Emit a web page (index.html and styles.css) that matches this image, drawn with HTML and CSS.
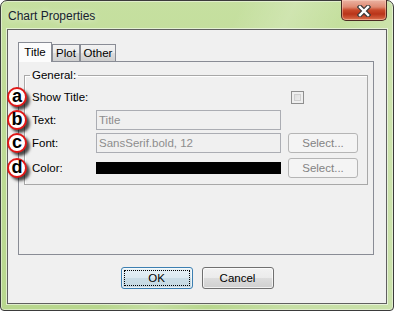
FILE: index.html
```html
<!DOCTYPE html>
<html>
<head>
<meta charset="utf-8">
<link rel="stylesheet" href="styles.css">
</head>
<body>
<div class="window">
  <div class="titlebar">
    <span class="title">Chart Properties</span>
    <div class="close">
      <svg width="14" height="12" viewBox="0 0 14 12">
        <path d="M3 2 L11 10 M11 2 L3 10" stroke="#3a3a3a" stroke-width="4.6" stroke-linecap="square"/>
        <path d="M3 2 L11 10 M11 2 L3 10" stroke="#ffffff" stroke-width="2.4" stroke-linecap="square"/>
      </svg>
    </div>
  </div>
  <div class="client">
    <div class="tabs">
      <div class="tab active tab-title">Title</div>
      <div class="tab tab-plot">Plot</div>
      <div class="tab tab-other">Other</div>
    </div>
    <div class="panel">
      <fieldset class="group">
        <legend>General:</legend>
        <div class="grid">
          <div class="label"><span class="mark">a</span>Show Title:</div>
          <div></div>
          <div class="checkcell"><span class="check"></span></div>

          <div class="label"><span class="mark">b</span>Text:</div>
          <div class="field">Title</div>
          <div></div>

          <div class="label"><span class="mark">c</span>Font:</div>
          <div class="field">SansSerif.bold, 12</div>
          <div class="btn disabled">Select...</div>

          <div class="label last"><span class="mark">d</span>Color:</div>
          <div class="colorcell last"><div class="swatch"></div></div>
          <div class="btn disabled last">Select...</div>
        </div>
      </fieldset>
    </div>
    <div class="buttons">
      <div class="btn push ok"><span class="focus">OK</span></div>
      <div class="btn push cancel">Cancel</div>
    </div>
  </div>
</div>
</body>
</html>
```

FILE: styles.css
```css
* { box-sizing: border-box; }
html, body {
  margin: 0;
  padding: 0;
  width: 394px;
  height: 311px;
  overflow: hidden;
  background: #ffffff;
}
body {
  font-family: "Liberation Sans", Arial, sans-serif;
  font-size: 11px;
  color: #000;
}
.window {
  width: 394px;
  height: 311px;
  border: 1px solid #3b3b3b;
  border-radius: 7px 7px 4px 4px;
  padding: 0 6px 6px 6px;
  display: flex;
  flex-direction: column;
  background:
    linear-gradient(115deg, rgba(255,255,255,0) 0%, rgba(255,255,255,0) 45%, rgba(255,255,255,0.18) 55%, rgba(255,255,255,0) 65%, rgba(255,255,255,0.2) 80%, rgba(255,255,255,0.25) 100%),
    linear-gradient(180deg, #c6e0a0 0%, #c0dc98 30%, #b8d78e 100%);
  box-shadow: inset 0 0 0 1px rgba(255,255,255,0.45);
}
.titlebar {
  height: 28px;
  display: flex;
  align-items: flex-start;
  position: relative;
}
.title {
  font-family: "Liberation Sans", Arial, sans-serif;
  font-size: 12px;
  color: #17222e;
  margin-top: 8px;
  margin-left: 1px;
  text-shadow: 0 0 6px rgba(255,255,255,0.9);
}
.close {
  margin-left: auto;
  margin-right: 0px;
  margin-top: -1px;
  width: 46px;
  height: 21px;
  border: 1px solid #4b2a22;
  border-top: none;
  border-radius: 0 0 5px 5px;
  background: linear-gradient(180deg, #ebb3a3 0%, #df8a72 35%, #c94a2c 50%, #b93419 70%, #cf5a3a 90%, #e07a58 100%);
  box-shadow: inset 0 0 0 1px rgba(255,220,200,0.45);
  display: flex;
  align-items: center;
  justify-content: center;
}
.close svg { display: block; margin-top: 1px; }

.client {
  flex: 1;
  border: 1px solid #606060;
  box-shadow: 0 0 0 1px rgba(255,255,255,0.55);
  background: #f0f0f0;
  padding: 12px 12px 14px 10px;
  display: flex;
  flex-direction: column;
}
.tabs {
  display: flex;
  align-items: flex-end;
  height: 20px;
  margin-bottom: -1px;
  position: relative;
  z-index: 1;
}
.tab {
  border: 1px solid #898c95;
  border-bottom: none;
  height: 17px;
  margin-bottom: 1px;
  text-align: center;
  line-height: 17px;
  background: linear-gradient(180deg, #f2f2f2 0%, #ebebeb 50%, #dddddd 51%, #cfcfcf 100%);
  color: #000;
  font-size: 11.5px;
}
.tab.active {
  height: 20px;
  margin-bottom: 0;
  background: #fcfcfc;
  line-height: 18px;
}
.tab-title { width: 34px; }
.tab-plot { width: 28px; }
.tab-other { width: 36px; }

.panel {
  height: 194px;
  border: 1px solid #898c95;
  background: #f0f0f0;
  padding: 0 5px 0 5px;
}
.group {
  margin: 7px 0 0 0;
  padding: 0 0 6px 7px;
  border: 1px solid #a8a8a8;
  box-shadow: inset 1px 1px 0 #ffffff;
  min-width: 0;
}
.group legend {
  padding: 0 2px;
  margin-left: -2px;
  font-size: 11.5px;
  line-height: 13px;
  color: #000;
}
.grid {
  display: grid;
  grid-template-columns: 57px 185px 70px;
  grid-template-rows: 20px 20px 20px 22px;
  column-gap: 7px;
  row-gap: 3px;
  padding-top: 5px;
  font-size: 11.5px;
}
.label {
  position: relative;
  display: flex;
  align-items: center;
  height: 20px;
  white-space: nowrap;
}
.last { align-self: end; }
.mark {
  position: absolute;
  left: -25px;
  top: 0;
  width: 20px;
  height: 20px;
  border: 2px solid #e01818;
  border-radius: 50%;
  background: #fff;
  font-family: "Liberation Sans", Arial, sans-serif;
  font-size: 18px;
  font-weight: bold;
  line-height: 15px;
  text-align: center;
  color: #000;
  box-shadow: 3px 3px 3px rgba(0,0,0,0.7);
}
.checkcell {
  display: flex;
  align-items: center;
  padding-left: 3px;
}
.check {
  width: 13px;
  height: 13px;
  border: 1px solid #8f8f8f;
  background: linear-gradient(135deg, #d8d8d8 0%, #f4f4f4 100%);
  box-shadow: inset 0 0 0 2px #efefef, inset 0 0 0 3px #cfcfcf;
}
.field {
  height: 20px;
  border: 1px solid #abadb3;
  background: #f0f0f0;
  color: #8d8d8d;
  padding: 0 2px;
  line-height: 18px;
  white-space: nowrap;
  overflow: hidden;
}
.colorcell {
  height: 20px;
  display: flex;
  align-items: center;
}
.swatch {
  width: 185px;
  height: 12px;
  background: #000;
}
.btn {
  height: 20px;
  border-radius: 3px;
  text-align: center;
  white-space: nowrap;
}
.btn.disabled {
  border: 1px solid #b5b5b5;
  background: #f4f4f4;
  color: #838383;
  line-height: 18px;
}
.buttons {
  margin-top: 12px;
  display: flex;
  justify-content: center;
  gap: 9px;
  padding-left: 2px;
  font-size: 11.5px;
}
.push {
  width: 72px;
  height: 22px;
  line-height: 20px;
  color: #000;
}
.ok {
  border: 1px solid #3c7fb1;
  background: linear-gradient(180deg, #e6f1f6 0%, #dbe9f0 50%, #cadde6 51%, #c4d9e3 100%);
  box-shadow: inset 0 0 0 1px rgba(255,255,255,0.6);
  padding: 2px;
}
.ok .focus {
  display: block;
  height: 16px;
  line-height: 14px;
  border: 1px dotted #000;
}
.cancel {
  border: 1px solid #707070;
  background: linear-gradient(180deg, #f2f2f2 0%, #ebebeb 50%, #dddddd 51%, #cfcfcf 100%);
  box-shadow: inset 0 0 0 1px rgba(255,255,255,0.7);
}
```
